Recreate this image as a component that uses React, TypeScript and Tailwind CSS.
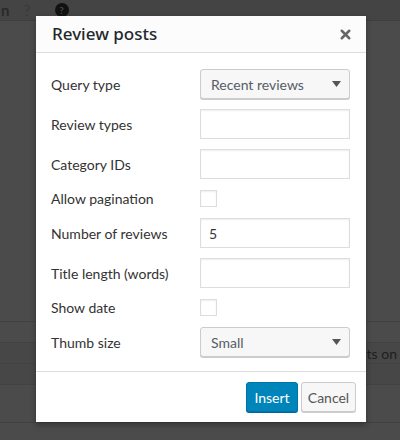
import { X } from 'lucide-react';

const font = { fontFamily: 'Lato, "Noto Sans", sans-serif' };

function TextInput({ value = '' }: { value?: string }) {
  return (
    <div className="w-[150px] h-[30px] border border-[#dddddd] bg-white shadow-[inset_0_1px_2px_rgba(0,0,0,0.07)] px-[8px] flex items-center text-[14px] text-[#32373c]">
      {value}
    </div>
  );
}

function Select({ value }: { value: string }) {
  return (
    <div className="w-[150px] h-[30px] border border-[#cccccc] rounded-[3px] bg-[#f7f7f7] shadow-[0_1px_0_#cccccc] pl-[10px] pr-[8px] flex items-center justify-between text-[14px] text-[#555d66]">
      <span>{value}</span>
      <svg width="9" height="6" viewBox="0 0 9 6">
        <path d="M0 0h9L4.5 6z" fill="#555555" />
      </svg>
    </div>
  );
}

function Checkbox() {
  return <div className="w-[17px] h-[17px] border border-[#dddddd] bg-white shadow-[inset_0_1px_2px_rgba(0,0,0,0.07)]" />;
}

function Row({ label, children, short }: { label: string; children: React.ReactNode; short?: boolean }) {
  return (
    <div className={`flex items-center ${short ? 'h-[19px]' : 'h-[30px]'}`}>
      <div className="w-[149px] text-[14px] text-[#333333]">{label}</div>
      {children}
    </div>
  );
}

export default function App() {
  return (
    <div className="relative w-[400px] h-[440px] overflow-hidden bg-[#4b4b4b]" style={font}>
      {/* dimmed page behind the modal */}
      <div className="h-[21px] bg-[#444444] border-b border-[#3e3e3e] flex items-center gap-[14px] pl-[1px] text-[#2a2a2a]">
        <span className="text-[15px] font-bold">n</span>
        <span className="text-[16px] text-[#3a3a3a]">?</span>
        <span className="w-[14px] h-[14px] rounded-full bg-[#111111] ml-[10px] text-[10px] text-[#444] flex items-center justify-center font-bold">?</span>
      </div>
      <div className="h-[300px]" />
      <div className="h-[21px] border-t border-[#424242]" />
      <div className="h-[21px] border-t border-[#424242] bg-[#474747] flex justify-end items-center pr-[3px] text-[14px] text-[#1e1e1e]">nts on</div>
      <div className="h-[21px] border-t border-[#424242] bg-[#474747]" />
      <div className="h-[38px] border-t border-[#424242]" />
      <div className="h-[17px] border-t border-[#424242]" />

      {/* modal */}
      <div className="absolute left-[36px] top-[16px] w-[330px] h-[406px] bg-white shadow-[0_3px_6px_rgba(0,0,0,0.3)] flex flex-col">
        <div className="h-[37px] bg-[#fcfcfc] border-b border-[#dddddd] flex items-center justify-between pl-[16px] pr-[13px] shrink-0">
          <span className="text-[17px] font-medium text-[#23282d]" style={{ fontFamily: '"Noto Sans", sans-serif' }}>Review posts</span>
          <X size={15} strokeWidth={4} className="text-[#666666]" />
        </div>
        <div className="flex-1 pl-[15px] pt-[16px] flex flex-col gap-[10px]">
          <Row label="Query type"><Select value="Recent reviews" /></Row>
          <Row label="Review types"><TextInput /></Row>
          <Row label="Category IDs"><TextInput /></Row>
          <Row label="Allow pagination" short><Checkbox /></Row>
          <Row label="Number of reviews"><TextInput value="5" /></Row>
          <Row label="Title length (words)"><TextInput /></Row>
          <Row label="Show date" short><Checkbox /></Row>
          <Row label="Thumb size"><Select value="Small" /></Row>
        </div>
        <div className="h-[51px] border-t border-[#dddddd] flex items-center justify-end gap-[3px] pr-[10px] shrink-0">
          <button className="w-[52px] h-[30px] rounded-[3px] bg-[#0085ba] border border-[#0073aa] shadow-[0_1px_0_#006799] text-white text-[14px]">Insert</button>
          <button className="w-[55px] h-[30px] rounded-[3px] bg-[#f7f7f7] border border-[#cccccc] shadow-[0_1px_0_#cccccc] text-[#555555] text-[14px]">Cancel</button>
        </div>
      </div>
    </div>
  );
}
